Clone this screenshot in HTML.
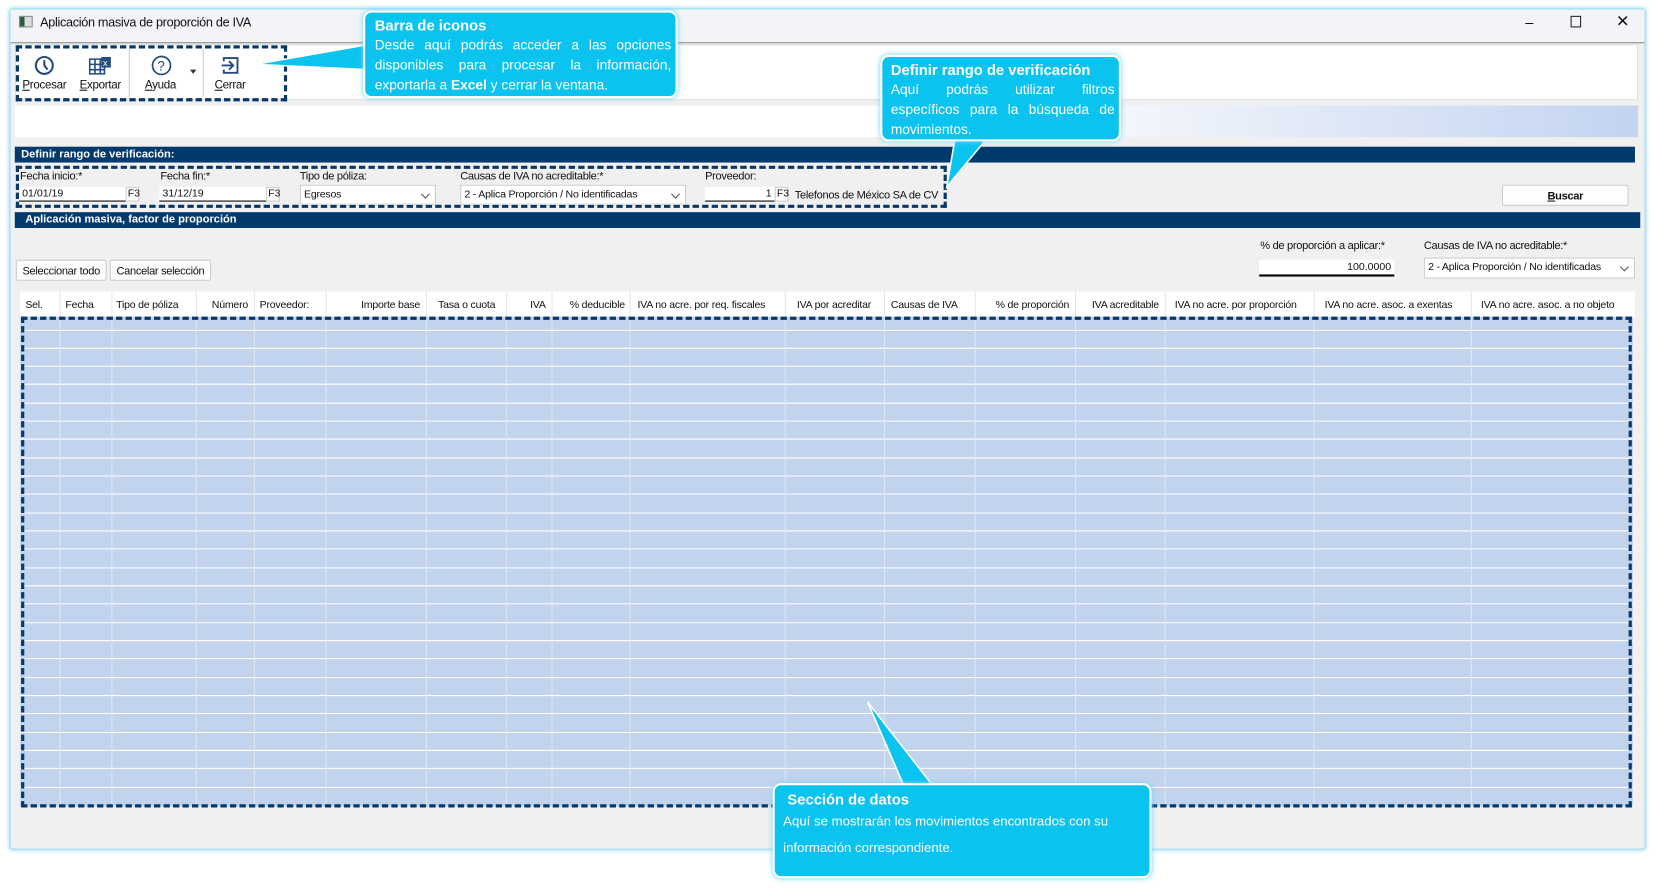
<!DOCTYPE html>
<html><head><meta charset="utf-8"><style>
*{box-sizing:border-box;margin:0;padding:0}
body{width:1655px;height:892px;overflow:hidden;background:#fff;font-family:"Liberation Sans",sans-serif;font-size:10.5px;color:#111}
#s{position:absolute;left:0;top:0;width:1568px;height:845px;transform:scale(1.0555);transform-origin:0 0}
.a{position:absolute}
.win{left:9px;top:8px;width:1550px;height:797px;background:#f0f0f0;border:1px solid #9fdcf0;box-shadow:0 0 4px #8fd8f3;border-radius:3px}
.bar{background:#023a6e;color:#fff;font-weight:bold;font-size:10.5px;padding:1px 0 0 6px;height:15px}
.lbl{font-size:10.5px;letter-spacing:-.3px}
.inp{background:#fff;border-bottom:1px solid #000;height:14px;font-size:10px;padding:1px 3px}
.f3{font-size:10px;background:#fff;border:1px solid #ccc;height:14px;width:13px;padding-left:1px}
.cmb{background:#fff;border:1px solid #ccc;height:19px;font-size:10px;padding:3px 3px;letter-spacing:-.2px}
.cmb:after{content:"";position:absolute;right:6px;top:5px;width:5px;height:5px;border-right:1px solid #555;border-bottom:1px solid #555;transform:rotate(45deg)}
.btn{background:#fdfdfd;border:1px solid #ccc;border-radius:2px;font-size:10.5px;text-align:center;padding-top:4px;height:20px;letter-spacing:-.3px}
.dash{border:3px dashed #083868}
.co{background:#0bc3ef;border:2px solid #fff;border-radius:8px;box-shadow:0 0 5px #6fd6f5;color:#fff}
.co b.t{display:block;font-size:14px;font-weight:bold}
.tb{text-align:center;font-size:11px;top:75px;letter-spacing:-.3px}
u{text-decoration:underline}
</style></head><body><div id="s">
<div class="a win"></div>
<div class="a" style="left:10px;top:9px;width:1548px;height:32px;background:#f2f4f8;border-bottom:1px solid #888"></div>
<div class="a" style="left:18px;top:15px;width:13px;height:11px;border:1px solid #888;background:linear-gradient(90deg,#2a5a40 0 4px,#ddd 4px)"></div>
<div class="a" style="left:38px;top:14px;font-size:12px;letter-spacing:-.3px">Aplicación masiva de proporción de IVA</div>
<div class="a" style="left:1445px;top:13px;font-size:14px">–</div>
<div class="a" style="left:1488px;top:15px;width:10px;height:11px;border:1px solid #222"></div>
<div class="a" style="left:1531px;top:11px;font-size:15px">✕</div>
<div class="a" style="left:14px;top:42px;width:1538px;height:53px;background:#fff;border:1px solid #ddd"></div>
<div class="a dash" style="left:15px;top:43px;width:257px;height:53px"></div>
<div class="a" style="left:122px;top:46px;width:1px;height:46px;background:#ccc"></div>
<div class="a" style="left:192px;top:46px;width:1px;height:46px;background:#ccc"></div>
<svg class="a" style="left:32px;top:52px" width="20" height="20" viewBox="0 0 20 20"><circle cx="10" cy="10" r="8" fill="none" stroke="#244c7c" stroke-width="2"/><path d="M10 5v5l3 4" fill="none" stroke="#244c7c" stroke-width="2"/></svg>
<svg class="a" style="left:84px;top:53px" width="22" height="18" viewBox="0 0 22 18"><path d="M1 3h14v14H1zM1 8h14M1 13h14M6 3v14M11 3v14" fill="none" stroke="#244c7c" stroke-width="1.5"/><rect x="12" y="1" width="9" height="10" fill="#244c7c"/><text x="13.5" y="9.5" font-size="9" fill="#fff" font-family="Liberation Sans">x</text></svg>
<svg class="a" style="left:143px;top:52px" width="20" height="20" viewBox="0 0 20 20"><circle cx="10" cy="10" r="8.5" fill="none" stroke="#244c7c" stroke-width="1.6"/><text x="6" y="15" font-size="13" fill="#244c7c" font-family="Liberation Sans">?</text></svg>
<div class="a" style="left:180px;top:66px;border:3px solid transparent;border-top:4px solid #333"></div>
<svg class="a" style="left:208px;top:52px" width="20" height="20" viewBox="0 0 20 20"><path d="M4 6V3h13v14H4v-3" fill="none" stroke="#244c7c" stroke-width="1.8"/><path d="M2 10h10M9 6l4 4-4 4" fill="none" stroke="#244c7c" stroke-width="1.8"/></svg>
<div class="a tb" style="left:20px;width:44px"><u>P</u>rocesar</div>
<div class="a tb" style="left:72px;width:46px"><u>E</u>xportar</div>
<div class="a tb" style="left:132px;width:40px"><u>A</u>yuda</div>
<div class="a tb" style="left:200px;width:36px"><u>C</u>errar</div>
<div class="a" style="left:14px;top:100px;width:1538px;height:30px;background:linear-gradient(90deg,#fff 0,#fff 60%,#c3d3f0 100%)"></div>
<div class="a bar" style="left:14px;top:139px;width:1535px">Definir rango de verificación:</div>
<div class="a dash" style="left:15px;top:157px;width:882px;height:40px"></div>
<div class="a lbl" style="left:19px;top:161px">Fecha inicio:*</div>
<div class="a lbl" style="left:152px;top:161px">Fecha fin:*</div>
<div class="a lbl" style="left:284px;top:161px">Tipo de póliza:</div>
<div class="a lbl" style="left:436px;top:161px">Causas de IVA no acreditable:*</div>
<div class="a lbl" style="left:668px;top:161px">Proveedor:</div>
<div class="a inp" style="left:18px;top:177px;width:101px">01/01/19</div><div class="a f3" style="left:119px;top:177px">F3</div>
<div class="a inp" style="left:151px;top:177px;width:101px">31/12/19</div><div class="a f3" style="left:252px;top:177px">F3</div>
<div class="a cmb" style="left:284px;top:175px;width:129px">Egresos</div>
<div class="a cmb" style="left:436px;top:175px;width:214px">2 - Aplica Proporción / No identificadas</div>
<div class="a inp" style="left:668px;top:177px;width:66px;text-align:right">1</div><div class="a f3" style="left:734px;top:177px">F3</div>
<div class="a" style="left:753px;top:179px;font-size:10.5px;letter-spacing:-.3px">Telefonos de México SA de CV</div>
<div class="a btn" style="left:1423px;top:175px;width:120px;font-weight:bold"><u>B</u>uscar</div>
<div class="a bar" style="left:14px;top:201px;width:1540px;padding-left:10px">Aplicación masiva, factor de proporción</div>
<div class="a lbl" style="left:1194px;top:227px">% de proporción a aplicar:*</div>
<div class="a" style="left:1193px;top:246px;width:128px;height:16px;background:#fff;border-bottom:2px solid #000;text-align:right;padding:2px 3px;font-size:10px">100.0000</div>
<div class="a lbl" style="left:1349px;top:227px">Causas de IVA no acreditable:*</div>
<div class="a cmb" style="left:1349px;top:244px;width:200px;height:20px">2 - Aplica Proporción / No identificadas</div>
<div class="a btn" style="left:15px;top:246px;width:86px">Seleccionar todo</div>
<div class="a btn" style="left:104px;top:246px;width:96px">Cancelar selección</div>
<svg class="a" style="left:19px;top:276px" width="1530" height="490">
<rect x="0" y="0" width="1530" height="24" fill="#fff"/>
<rect x="0" y="24" width="1528" height="464" fill="#c2d3ee"/>
<g stroke="#fff" stroke-width="1">
<path d="M0 37H1528M0 54H1528M0 71H1528M0 88H1528M0 106H1528M0 123H1528M0 140H1528M0 158H1528M0 175H1528M0 192H1528M0 210H1528M0 227H1528M0 244H1528M0 262H1528M0 279H1528M0 296H1528M0 314H1528M0 331H1528M0 348H1528M0 366H1528M0 383H1528M0 400H1528M0 418H1528M0 435H1528M0 452H1528M0 470H1528"/>
</g>
<g stroke="#e0e6f0"><path d="M38 0V488M87 0V488M167 0V488M222 0V488M290 0V488M385 0V488M461 0V488M504 0V488M578 0V488M725 0V488M819 0V488M905 0V488M1000 0V488M1085 0V488M1226 0V488M1375 0V488"/></g>
<g font-family="Liberation Sans" font-size="10" fill="#111" letter-spacing="-0.2">
<text x="5" y="16">Sel.</text><text x="43" y="16">Fecha</text><text x="91" y="16">Tipo de póliza</text>
<text x="216" y="16" text-anchor="end">Número</text><text x="227" y="16">Proveedor:</text>
<text x="379" y="16" text-anchor="end">Importe base</text><text x="396" y="16">Tasa o cuota</text>
<text x="498" y="16" text-anchor="end">IVA</text><text x="573" y="16" text-anchor="end">% deducible</text>
<text x="585" y="16">IVA no acre. por req. fiscales</text><text x="736" y="16">IVA por acreditar</text>
<text x="825" y="16">Causas de IVA</text><text x="994" y="16" text-anchor="end">% de proporción</text>
<text x="1079" y="16" text-anchor="end">IVA acreditable</text><text x="1094" y="16">IVA no acre. por proporción</text>
<text x="1236" y="16">IVA no acre. asoc. a exentas</text><text x="1384" y="16">IVA no acre. asoc. a no objeto</text>
</g></svg>
<div class="a dash" style="left:20px;top:300px;width:1526px;height:465px"></div>
<svg class="a" style="left:0;top:0" width="1568" height="845">
<polygon points="350,42 242,61 350,66" fill="#0bc3ef" stroke="#fff" stroke-width="1.5"/>
<polygon points="905,130 897,177 936,130" fill="#0bc3ef" stroke="#fff" stroke-width="1.5"/>
<polygon points="822,665 857,746 885,746" fill="#0bc3ef" stroke="#fff" stroke-width="1.5"/>
</svg>
<div class="a co" style="left:344px;top:10px;width:298px;height:83px;padding:4px 4px 0 9px">
<b class="t">Barra de iconos</b>
<div style="font-size:13px;line-height:19px;text-align:justify;text-align-last:left;margin-top:1px">Desde aquí podrás acceder a las opciones disponibles para procesar la información, exportarla a <b>Excel</b> y cerrar la ventana.</div></div>
<div class="a co" style="left:834px;top:52px;width:228px;height:82px;padding:4px 4px 0 8px">
<b class="t">Definir rango de verificación</b>
<div style="font-size:13px;line-height:19px;text-align:justify;text-align-last:left;margin-top:1px">Aquí podrás utilizar filtros específicos para la búsqueda de movimientos.</div></div>
<div class="a co" style="left:732px;top:742px;width:359px;height:90px;padding:5px 6px 0 8px">
<b class="t" style="margin-left:4px">Sección de datos</b>
<div style="font-size:12.5px;line-height:25px;margin-top:1px">Aquí se mostrarán los movimientos encontrados con su información correspondiente.</div></div>
</div></body></html>
